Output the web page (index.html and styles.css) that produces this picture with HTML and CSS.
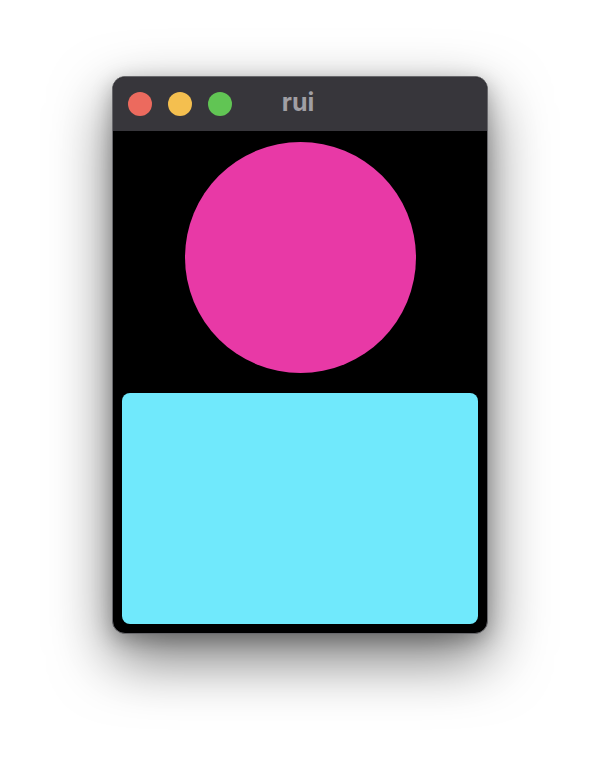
FILE: index.html
```html
<!DOCTYPE html>
<html>
<head>
<meta charset="utf-8">
<link rel="stylesheet" href="styles.css">
</head>
<body>
<div class="window">
  <div class="titlebar">
    <div class="lights">
      <span class="light red"></span>
      <span class="light yellow"></span>
      <span class="light green"></span>
    </div>
    <div class="title">rui</div>
  </div>
  <div class="content">
    <div class="circle"></div>
    <div class="rect"></div>
  </div>
</div>
</body>
</html>
```
FILE: styles.css
```css
html, body {
  margin: 0;
  padding: 0;
  background: #ffffff;
}
body {
  width: 600px;
  height: 782px;
  padding-top: 76px;
  box-sizing: border-box;
  font-family: "Inter", "Liberation Sans", sans-serif;
}
.window {
  width: 376px;
  height: 558px;
  margin: 0 auto;
  box-sizing: border-box;
  border: 1px solid #68686c;
  border-radius: 13px;
  background: #000;
  overflow: hidden;
  box-shadow: 0 24px 60px rgba(0,0,0,0.55), 0 6px 20px rgba(0,0,0,0.25);
  display: flex;
  flex-direction: column;
}
.titlebar {
  height: 54px;
  flex: none;
  background: #37363b;
  position: relative;
  display: flex;
  align-items: center;
  justify-content: center;
}
.lights {
  position: absolute;
  left: 15px;
  top: 15px;
  display: flex;
  gap: 16px;
}
.light {
  width: 24px;
  height: 24px;
  border-radius: 50%;
  display: block;
}
.red { background: #ec6a5e; }
.yellow { background: #f4bf4f; }
.green { background: #61c554; }
.title {
  color: #a09fa4;
  font-weight: 700;
  font-size: 25px;
  line-height: 1;
  margin-left: -4px;
  margin-top: -3px;
}
.content {
  flex: 1;
  display: flex;
  flex-direction: column;
  align-items: center;
  padding: 11px 9px 9px 9px;
}
.circle {
  width: 231px;
  height: 231px;
  border-radius: 50%;
  background: #e839a6;
  flex: none;
}
.rect {
  margin-top: 20px;
  align-self: stretch;
  flex: 1;
  background: #70e9fc;
  border-radius: 8px;
}
```
